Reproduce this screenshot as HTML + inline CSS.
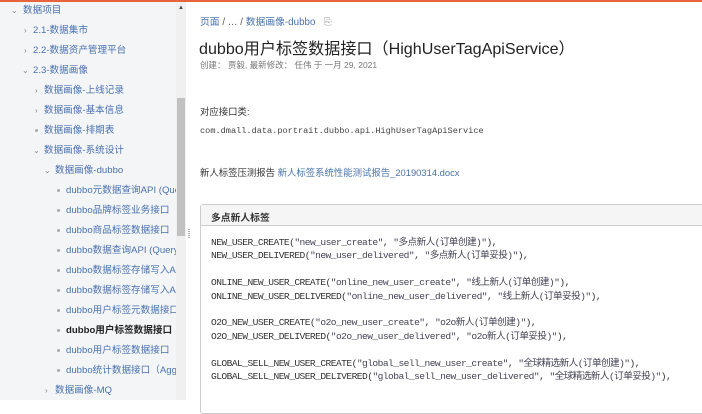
<!DOCTYPE html>
<html><head><meta charset="utf-8"><style>
*{margin:0;padding:0;box-sizing:border-box}
body{width:702px;height:400px;overflow:hidden;background:#fff;font-family:"Liberation Sans","Noto Sans CJK SC",sans-serif;position:relative}
.top{position:absolute;left:0;top:0;width:702px;height:2px;background:#e8643c}
.side{position:absolute;left:0;top:2px;width:186px;height:398px;background:#f4f5f7;border-right:1px solid #e4e4e4;overflow:hidden}
.in{position:absolute;left:0;top:1px;width:186px;height:398px}
.it{position:absolute;font-size:9.6px;color:#4a72ad;white-space:nowrap;line-height:14px}
.it.b{color:#222;font-weight:bold}
.ar{position:absolute;font-size:8px;color:#888;line-height:14px}
.dot{position:absolute;width:3px;height:3px;border-radius:50%;background:#aaa}
.sb{position:absolute;left:176px;top:2px;width:10px;height:398px;background:#f0f0f0}
.th{position:absolute;left:177px;top:98px;width:8px;height:138px;background:#c1c1c1}
.bc{position:absolute;left:200px;top:14px;font-size:9.8px;color:#4a72ad;white-space:nowrap}
.bc span{color:#555}
h1{position:absolute;left:199px;top:35px;font-size:16.1px;font-weight:normal;color:#222;white-space:nowrap}
.meta{position:absolute;left:200px;top:59px;font-size:8.5px;color:#777;white-space:nowrap}
.p{position:absolute;left:200px;font-size:9.4px;color:#333;white-space:nowrap}
.mono{font-family:"Liberation Mono","Noto Sans CJK SC",monospace}
.panel{position:absolute;left:200px;top:204px;width:520px;height:210px;border:1px solid #ccc;border-radius:3px}
.ph{height:21px;background:#f5f5f5;border-bottom:1px solid #ccc;font-size:9.8px;font-weight:bold;color:#333;padding:5px 0 0 10px}
pre{position:absolute;left:10px;top:31px;font-family:"Liberation Mono","Noto Sans CJK SC",monospace;font-size:9.6px;letter-spacing:-0.55px;line-height:13.4px;color:#333}
pre i{font-style:normal;color:#445}
.grip{position:absolute;left:188px;top:229px;width:2px;height:9px;border-left:1px dotted #aaa;border-right:1px dotted #aaa}
</style></head><body>
<div class="top"></div>
<div class="side"><div class="in">
<span class="ar" style="left:11px;top:1px">⌄</span><span class="it" style="left:23px;top:1px">数据项目</span>
<span class="ar" style="left:24px;top:21px">›</span><span class="it" style="left:33px;top:21px">2.1-数据集市</span>
<span class="ar" style="left:24px;top:41px">›</span><span class="it" style="left:33px;top:41px">2.2-数据资产管理平台</span>
<span class="ar" style="left:22px;top:61px">⌄</span><span class="it" style="left:33px;top:61px">2.3-数据画像</span>
<span class="ar" style="left:35px;top:81px">›</span><span class="it" style="left:44px;top:81px">数据画像-上线记录</span>
<span class="ar" style="left:35px;top:101px">›</span><span class="it" style="left:44px;top:101px">数据画像-基本信息</span>
<span class="dot" style="left:35px;top:126px"></span><span class="it" style="left:44px;top:121px">数据画像-排期表</span>
<span class="ar" style="left:33px;top:141px">⌄</span><span class="it" style="left:44px;top:141px">数据画像-系统设计</span>
<span class="ar" style="left:44px;top:161px">⌄</span><span class="it" style="left:55px;top:161px">数据画像-dubbo</span>
<span class="dot" style="left:57px;top:186px"></span><span class="it" style="left:66px;top:181px">dubbo元数据查询API (Query</span>
<span class="dot" style="left:57px;top:206px"></span><span class="it" style="left:66px;top:201px">dubbo品牌标签业务接口（</span>
<span class="dot" style="left:57px;top:226px"></span><span class="it" style="left:66px;top:221px">dubbo商品标签数据接口（</span>
<span class="dot" style="left:57px;top:246px"></span><span class="it" style="left:66px;top:241px">dubbo数据查询API (Query</span>
<span class="dot" style="left:57px;top:266px"></span><span class="it" style="left:66px;top:261px">dubbo数据标签存储写入API</span>
<span class="dot" style="left:57px;top:286px"></span><span class="it" style="left:66px;top:281px">dubbo数据标签存储写入API</span>
<span class="dot" style="left:57px;top:306px"></span><span class="it" style="left:66px;top:301px">dubbo用户标签元数据接口</span>
<span class="dot" style="left:57px;top:326px"></span><span class="it b" style="left:66px;top:321px">dubbo用户标签数据接口</span>
<span class="dot" style="left:57px;top:346px"></span><span class="it" style="left:66px;top:341px">dubbo用户标签数据接口（</span>
<span class="dot" style="left:57px;top:366px"></span><span class="it" style="left:66px;top:361px">dubbo统计数据接口（Aggs</span>
<span class="ar" style="left:45px;top:381px">›</span><span class="it" style="left:55px;top:381px">数据画像-MQ</span>
</div></div>
<div class="sb"></div><div class="th"></div>
<div style="position:absolute;left:178px;top:5px;font-size:6px;color:#444">▲</div>
<div class="grip"></div>
<div class="bc">页面 <span>/ … /</span> 数据画像-dubbo &nbsp;&nbsp;<span style="color:#999;font-size:10px">⎘</span></div>
<h1>dubbo用户标签数据接口（HighUserTagApiService）</h1>
<div class="meta">创建： 贾毅, 最新修改： 任伟 于 一月 29, 2021</div>
<div class="p" style="top:104px">对应接口类:</div>
<div class="p mono" style="top:126px;font-size:8.6px;color:#444">com.dmall.data.portrait.dubbo.api.HighUserTagApiService</div>
<div class="p" style="top:165px">新人标签压测报告 <span style="color:#4a72ad">新人标签系统性能测试报告_20190314.docx</span></div>
<div class="panel"><div class="ph">多点新人标签</div>
<pre>NEW_USER_CREATE(<i>"new_user_create"</i>, <i>"多点新人(订单创建)"</i>),
NEW_USER_DELIVERED(<i>"new_user_delivered"</i>, <i>"多点新人(订单妥投)"</i>),

ONLINE_NEW_USER_CREATE(<i>"online_new_user_create"</i>, <i>"线上新人(订单创建)"</i>),
ONLINE_NEW_USER_DELIVERED(<i>"online_new_user_delivered"</i>, <i>"线上新人(订单妥投)"</i>),

O2O_NEW_USER_CREATE(<i>"o2o_new_user_create"</i>, <i>"o2o新人(订单创建)"</i>),
O2O_NEW_USER_DELIVERED(<i>"o2o_new_user_delivered"</i>, <i>"o2o新人(订单妥投)"</i>),

GLOBAL_SELL_NEW_USER_CREATE(<i>"global_sell_new_user_create"</i>, <i>"全球精选新人(订单创建)"</i>),
GLOBAL_SELL_NEW_USER_DELIVERED(<i>"global_sell_new_user_delivered"</i>, <i>"全球精选新人(订单妥投)"</i>),
</pre></div>
</body></html>
